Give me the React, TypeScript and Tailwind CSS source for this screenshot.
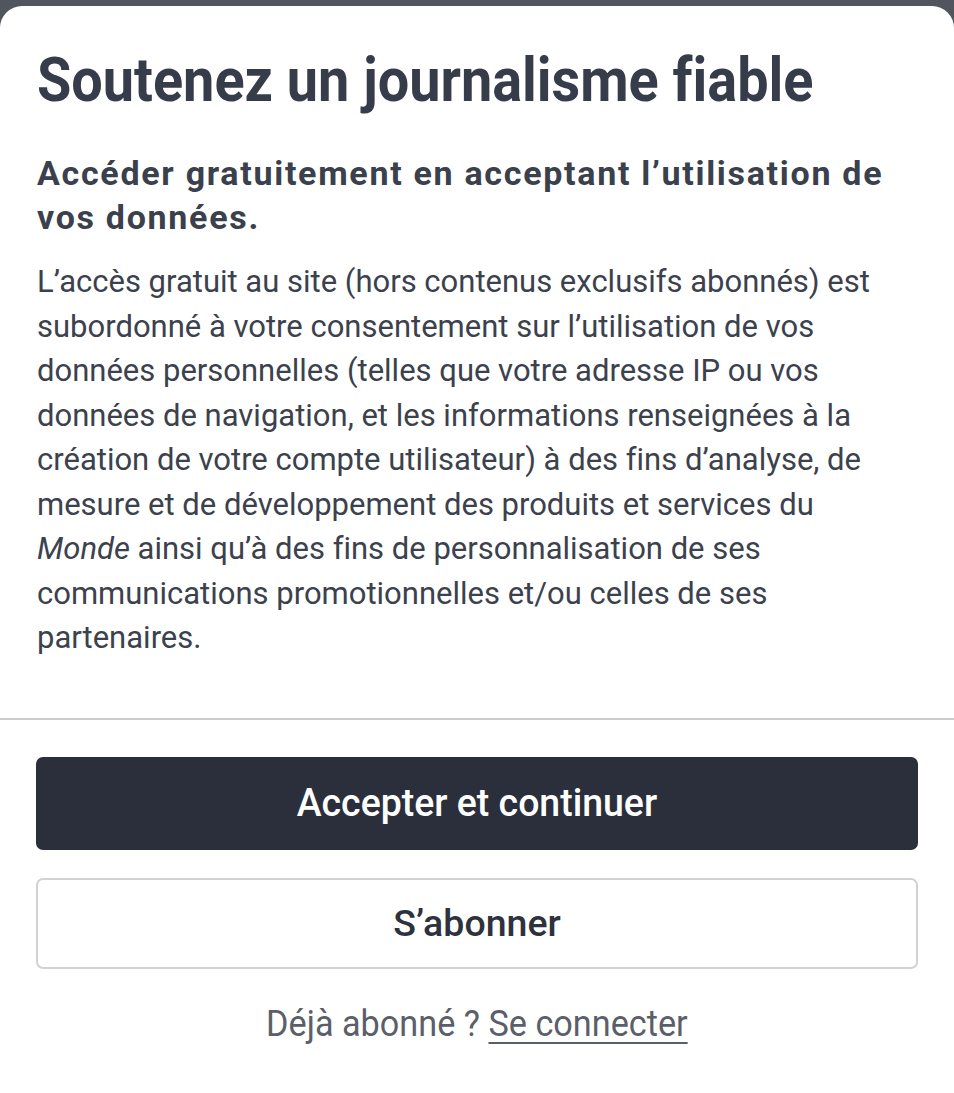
export default function App() {
  const roboto = "font-['Roboto',sans-serif]"
  return (
    <div className="min-h-[1093px] w-full bg-[#50555e] pt-[6px] [font-variant-ligatures:none]">
      <div className="min-h-[1087px] rounded-t-[22px] bg-white">
        <div className="px-[37px] pt-[43px]">
          <h1 className={`${roboto} whitespace-nowrap text-[62px] font-bold leading-[62px] text-[#363c4a]`}>
            <span className="inline-block origin-left scale-x-[0.9]">Soutenez un journalisme fiable</span>
          </h1>
          <h2 className={`mt-[40px] ${roboto} whitespace-nowrap text-[34px] font-bold leading-[44px] tracking-[0.05em] text-[#3a404c]`}>
            Accéder gratuitement en acceptant l’utilisation de
            <br />
            vos données.
          </h2>
          <p className={`mt-[21px] ${roboto} whitespace-nowrap text-[31px] leading-[44.5px] text-[#3b414d]`}>
            L’accès gratuit au site (hors contenus exclusifs abonnés) est
            <br />
            subordonné à votre consentement sur l’utilisation de vos
            <br />
            données personnelles (telles que votre adresse IP ou vos
            <br />
            données de navigation, et les informations renseignées à la
            <br />
            création de votre compte utilisateur) à des fins d’analyse, de
            <br />
            mesure et de développement des produits et services du
            <br />
            <i>Monde</i> ainsi qu’à des fins de personnalisation de ses
            <br />
            communications promotionnelles et/ou celles de ses
            <br />
            partenaires.
          </p>
        </div>
        <div className="mt-[57px] h-[2px] w-full bg-[#cbcbd0]" />
        <div className="flex flex-col gap-[28px] px-[36px] pt-[37px]">
          <button className={`flex h-[93px] items-center justify-center rounded-[7px] bg-[#2a2f3b] ${roboto} text-[38px] font-medium text-white`}>
            <span className="inline-block scale-x-[0.985]">Accepter et continuer</span>
          </button>
          <button className={`flex h-[91px] items-center justify-center rounded-[7px] border-2 border-[#d2d2d4] bg-white ${roboto} text-[37.5px] font-medium text-[#2d323d]`}>
            S’abonner
          </button>
        </div>
        <p className={`mt-[33px] text-center ${roboto} text-[37px] leading-[44px] text-[#5a5f6a]`}>
          <span className="inline-block scale-x-[0.925]">
            Déjà abonné ?{" "}
            <a className="underline decoration-[2px] underline-offset-[6px]">Se connecter</a>
          </span>
        </p>
      </div>
    </div>
  )
}
